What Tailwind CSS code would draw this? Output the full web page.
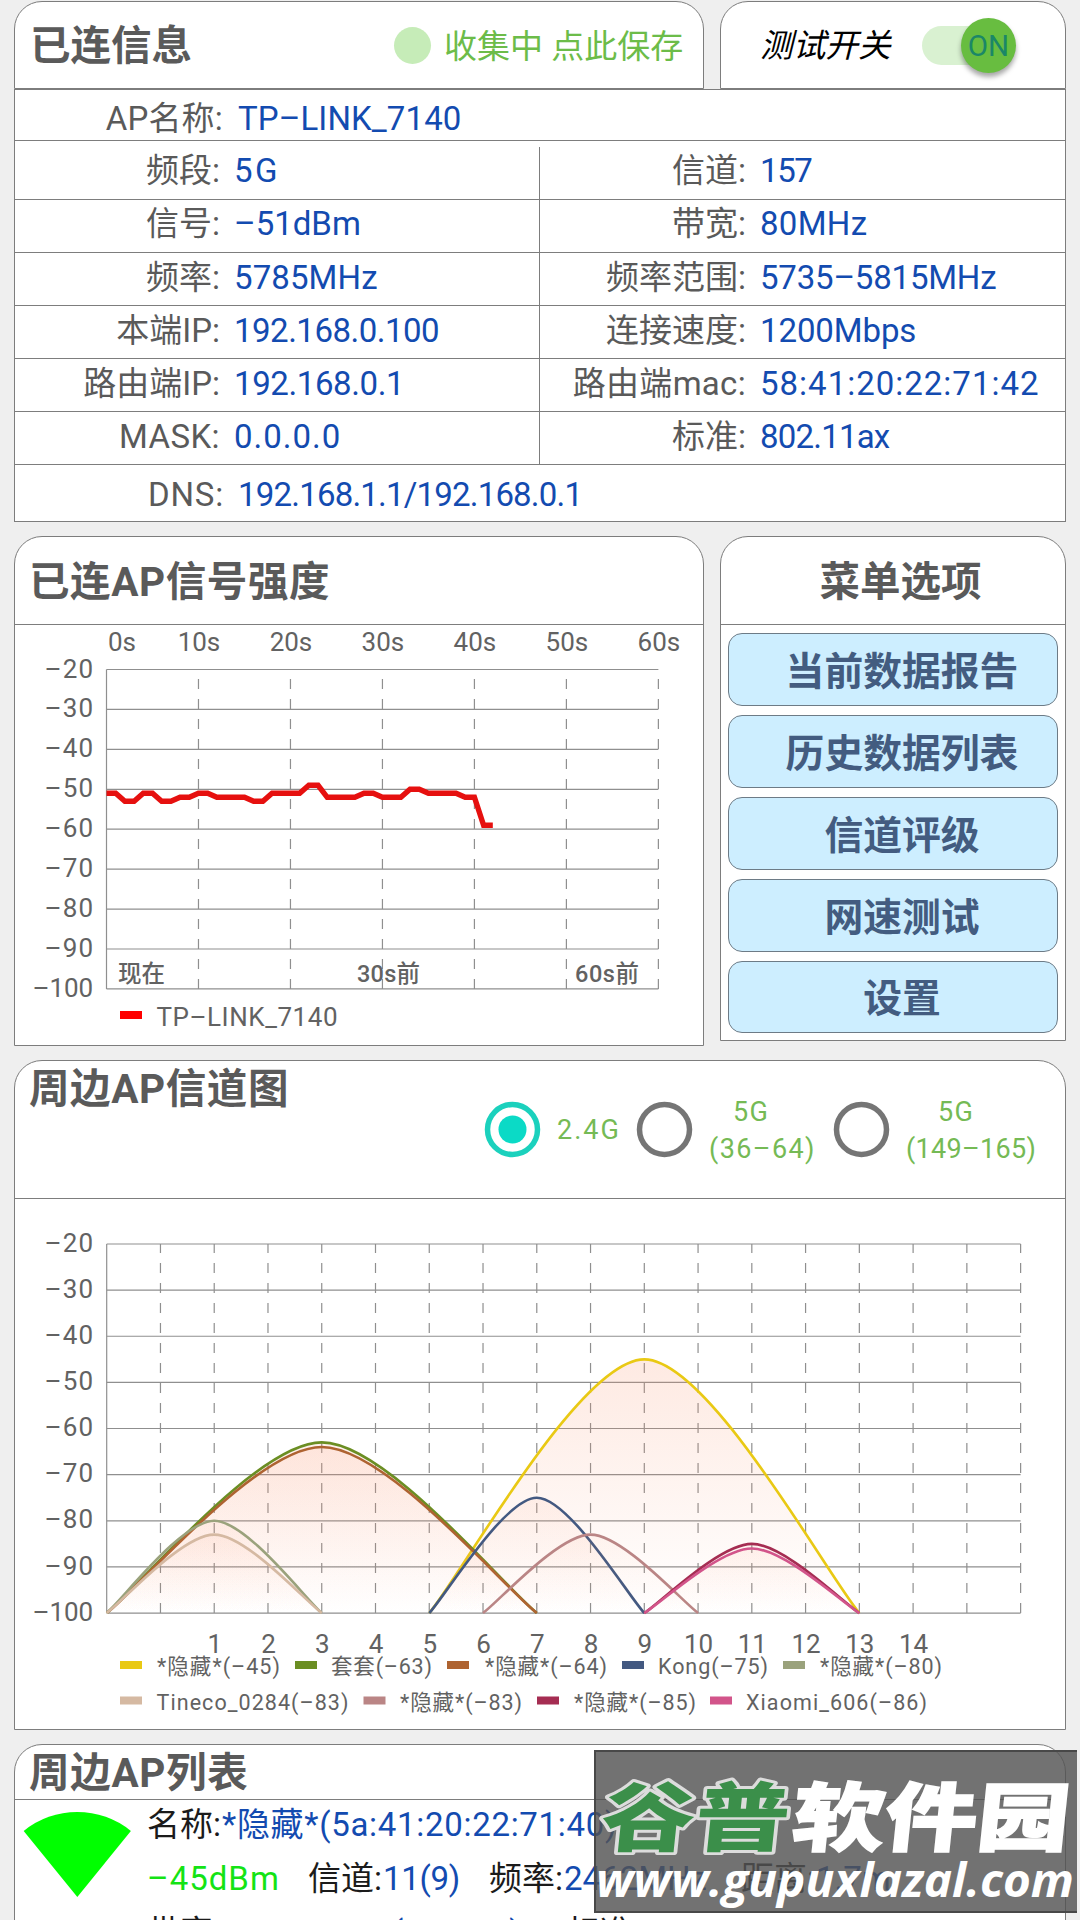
<!DOCTYPE html>
<html lang="zh-CN">
<head>
<meta charset="utf-8">
<title>WiFi</title>
<script src="https://cdn.jsdelivr.net/npm/@tailwindcss/browser@4"></script>
</head>
<body class="bg-[#efefef]">
<main class="relative h-[1920px] w-[1080px] overflow-hidden pt-[1px] pl-[14px] text-[#5a5a5a] [font-family:Roboto,'Noto_Sans_CJK_SC',sans-serif]">

  <!-- connection info -->
  <div class="flex gap-4">
    <div class="flex h-[88px] w-[690px] items-center rounded-t-[28px] border border-[#7d7d7d] bg-white pl-[15px]">
      <h2 class="w-[364px] pt-[3px] text-[40.5px] leading-none font-bold">已连信息</h2>
      <span class="size-[37px] rounded-full bg-[#c6ecb8]"></span>
      <span class="ml-[13px] pt-[2px] text-[33px] leading-none whitespace-nowrap text-[#6cbc49]">收集中 点此保存</span>
    </div>
    <div class="flex h-[88px] w-[346px] items-center rounded-t-[28px] border border-[#7d7d7d] bg-white pl-[39px]">
      <span class="w-[162px] pt-[3px] text-[32.7px] leading-none text-black italic">测试开关</span>
      <div class="flex h-[39px] w-[94px] items-center justify-end rounded-full bg-linear-to-r from-[#d9f1d1] from-60% to-transparent to-80%">
        <span class="flex size-[55px] shrink-0 items-center justify-center rounded-full bg-[#68bd40] pt-[2px] text-[29.5px] text-[#1b8767] shadow-[0_4px_5px_rgba(0,0,0,0.35)]">ON</span>
      </div>
    </div>
  </div>
  <section id="info" class="w-[1052px] border border-[#7d7d7d] bg-white text-[33px] leading-none whitespace-nowrap">
    <div class="flex h-[51px] items-center border-b border-[#7d7d7d] pt-[7px]">
      <span class="w-[208px] text-right tracking-[0.2px]">AP名称:</span><span class="ml-[15px] tracking-[0.1px] text-[#134bb0]">TP–LINK_7140</span>
    </div>
    <div class="flex h-[59px] border-b border-[#7d7d7d]">
      <div class="mt-[6px] flex w-[525px] items-center border-r border-[#7d7d7d] pb-[5px]"><span class="w-[205px] text-right">频段:</span><span class="ml-[14px] tracking-[2.5px] text-[#134bb0]">5G</span></div>
      <div class="flex items-center"><span class="w-[206px] text-right">信道:</span><span class="ml-[14px] tracking-[-1.4px] text-[#134bb0]">157</span></div>
    </div>
    <div class="flex h-[53px] border-b border-[#7d7d7d]">
      <div class="flex w-[525px] items-center border-r border-[#7d7d7d] pb-[5px]"><span class="w-[205px] text-right">信号:</span><span class="ml-[14px] text-[#134bb0]">–51dBm</span></div>
      <div class="flex items-center pb-[5px]"><span class="w-[206px] text-right">带宽:</span><span class="ml-[14px] tracking-[0.3px] text-[#134bb0]">80MHz</span></div>
    </div>
    <div class="flex h-[53px] border-b border-[#7d7d7d]">
      <div class="flex w-[525px] items-center border-r border-[#7d7d7d] pb-[4px]"><span class="w-[205px] text-right">频率:</span><span class="ml-[14px] tracking-[0.1px] text-[#134bb0]">5785MHz</span></div>
      <div class="flex items-center pb-[4px]"><span class="w-[206px] text-right">频率范围:</span><span class="ml-[14px] tracking-[-0.2px] text-[#134bb0]">5735–5815MHz</span></div>
    </div>
    <div class="flex h-[53px] border-b border-[#7d7d7d]">
      <div class="flex w-[525px] items-center border-r border-[#7d7d7d] pb-[4px]"><span class="w-[205px] text-right">本端IP:</span><span class="ml-[14px] tracking-[-0.5px] text-[#134bb0]">192.168.0.100</span></div>
      <div class="flex items-center pb-[4px]"><span class="w-[206px] text-right">连接速度:</span><span class="ml-[14px] tracking-[-0.1px] text-[#134bb0]">1200Mbps</span></div>
    </div>
    <div class="flex h-[53px] border-b border-[#7d7d7d]">
      <div class="flex w-[525px] items-center border-r border-[#7d7d7d] pb-[4px]"><span class="w-[205px] text-right">路由端IP:</span><span class="ml-[14px] tracking-[-0.4px] text-[#134bb0]">192.168.0.1</span></div>
      <div class="flex items-center pb-[4px]"><span class="w-[206px] text-right tracking-[0.3px]">路由端mac:</span><span class="ml-[14px] tracking-[1px] text-[#134bb0]">58:41:20:22:71:42</span></div>
    </div>
    <div class="flex h-[53px] border-b border-[#7d7d7d]">
      <div class="flex w-[525px] items-center border-r border-[#7d7d7d] pb-[4px]"><span class="w-[205px] text-right tracking-[0.4px]">MASK:</span><span class="ml-[14px] tracking-[1px] text-[#134bb0]">0.0.0.0</span></div>
      <div class="flex items-center pb-[4px]"><span class="w-[206px] text-right">标准:</span><span class="ml-[14px] tracking-[-0.8px] text-[#134bb0]">802.11ax</span></div>
    </div>
    <div class="flex h-[56px] items-center pt-[3px]">
      <span class="w-[209px] text-right tracking-[0.8px]">DNS:</span><span class="ml-[14px] tracking-[-0.8px] text-[#134bb0]">192.168.1.1/192.168.0.1</span>
    </div>
  </section>

  <!-- signal strength + menu -->
  <div class="mt-[14px] flex items-start gap-4">
    <section class="h-[510px] w-[690px] rounded-t-[28px] border border-[#7d7d7d] bg-white">
      <h2 class="flex h-[88px] items-center border-b border-[#7d7d7d] pt-[3px] pl-[14px] text-[40.5px] leading-none font-bold tracking-[0.6px]">已连AP信号强度</h2>
      <svg id="signal" class="block" width="688" height="420" viewBox="15 625 688 420"></svg>
    </section>
    <section class="h-[505px] w-[346px] rounded-t-[28px] border border-[#7d7d7d] bg-white">
      <h2 class="flex h-[88px] items-center justify-center border-b border-[#7d7d7d] pt-[3px] pl-[15px] text-[40.5px] leading-none font-bold">菜单选项</h2>
      <div class="flex flex-col gap-[9px] px-[7px] pt-[8px] text-[38.8px] leading-none font-bold text-[#435c80]">
        <button class="h-[73px] rounded-[14px] border border-[#6d7b86] bg-[#cdeeff] pt-[5px] pl-[18px]">当前数据报告</button>
        <button class="h-[73px] rounded-[14px] border border-[#6d7b86] bg-[#cdeeff] pt-[5px] pl-[18px]">历史数据列表</button>
        <button class="h-[73px] rounded-[14px] border border-[#6d7b86] bg-[#cdeeff] pt-[5px] pl-[18px]">信道评级</button>
        <button class="h-[73px] rounded-[14px] border border-[#6d7b86] bg-[#cdeeff] pt-[5px] pl-[18px]">网速测试</button>
        <button class="h-[72px] rounded-[14px] border border-[#6d7b86] bg-[#cdeeff] pt-[5px] pl-[18px]">设置</button>
      </div>
    </section>
  </div>

  <!-- channel chart -->
  <section class="mt-[14px] h-[670px] w-[1052px] rounded-t-[28px] border border-[#7d7d7d] bg-white">
    <div class="flex h-[138px] border-b border-[#7d7d7d] pl-[14px]">
      <h2 class="w-[455px] pt-[8px] text-[40.5px] leading-[40px] font-bold tracking-[0.6px]">周边AP信道图</h2>
      <div class="flex h-[136px] items-center text-[27px] leading-[37px] text-[#75ba55]">
        <svg width="57" height="57" viewBox="0 0 57 57"><circle cx="28.5" cy="28.5" r="25" fill="none" stroke="#1bd1bd" stroke-width="5.5"/><circle cx="28.5" cy="28.5" r="14" fill="#0bdac6"/></svg>
        <span class="ml-[16px] w-[79px] pt-[2px] tracking-[2px]">2.4G</span>
        <svg width="57" height="57" viewBox="0 0 57 57"><circle cx="28.5" cy="28.5" r="25" fill="none" stroke="#757575" stroke-width="5.5"/></svg>
        <span class="ml-[16px] w-[124px] pt-[3px] tracking-[1.4px]"><span class="ml-[24px]">5G</span><br>(36–64)</span>
        <svg width="57" height="57" viewBox="0 0 57 57"><circle cx="28.5" cy="28.5" r="25" fill="none" stroke="#757575" stroke-width="5.5"/></svg>
        <span class="ml-[16px] pt-[3px] tracking-[0.3px]"><span class="ml-[32px] tracking-[1.4px]">5G</span><br>(149–165)</span>
      </div>
    </div>
    <svg id="channels" class="block" width="1050" height="530" viewBox="15 1199 1050 530"></svg>
  </section>

  <!-- AP list -->
  <section class="mt-[14px] h-[240px] w-[1052px] rounded-t-[28px] border border-[#7d7d7d] bg-white">
    <h2 class="flex h-[55px] items-center border-b border-[#7d7d7d] pt-[2px] pl-[14px] text-[40.5px] leading-none font-bold tracking-[0.7px]">周边AP列表</h2>
    <div class="flex">
      <svg class="mt-[10px] ml-[7px] shrink-0" width="110" height="90" viewBox="0 0 110 90"><path d="M55.3 87 1.7 21A85 85 0 0 1 108.9 21Z" fill="#0f0"/></svg>
      <div class="ml-[15px] text-[33px] leading-[54px] whitespace-nowrap text-[#1b1b1b]">
        <p class="-mt-[2px] flex"><span class="w-[75px]">名称:</span><span class="tracking-[0.7px] text-[#134bb0]">*隐藏*(5a:41:20:22:71:40)</span></p>
        <p class="flex"><span class="w-[161px] tracking-[1px] text-[#14e314]">–45dBm</span><span class="w-[75px]">信道:</span><span class="w-[106px] tracking-[-0.3px] text-[#134bb0]">11(9)</span><span class="w-[75px]">频率:</span><span class="w-[177px] text-[#134bb0]">2462MHz</span><span class="w-[75px]">距离:</span><span class="text-[#134bb0]">1.7m</span></p>
        <p class="flex"><span class="w-[75px]">带宽:</span><span class="w-[345px] text-[#134bb0]">2452–2472(20MHz)</span><span>标准:</span></p>
      </div>
    </div>
  </section>

  <!-- site badge -->
  <div class="absolute top-[1750px] left-[594px] h-[163px] w-[483px] border-y-2 border-l-2 border-[#484848] bg-[#535353]/82">
    <svg class="block" width="481" height="159" viewBox="596 1752 481 159" font-family="'Noto Sans CJK SC',sans-serif" font-weight="900">
      <g transform="translate(603 1845) skewX(-6)">
        <text x="-4" y="0" font-size="75" textLength="188" lengthAdjust="spacingAndGlyphs" fill="#3b8f4a" stroke="#dcdcdc" stroke-width="6" stroke-linejoin="round" paint-order="stroke">谷普</text>
        <text x="187" y="0" font-size="75" textLength="277" lengthAdjust="spacingAndGlyphs" fill="#fff" stroke="#fff" stroke-width="1.5">软件园</text>
      </g>
      <text x="596" y="1897" font-family="'Open Sans',sans-serif" font-weight="700" font-style="italic" font-size="46" textLength="478" lengthAdjust="spacingAndGlyphs" fill="#fff">www.gupuxlazal.com</text>
    </svg>
  </div>
</main>

<script>
const line = (x1, y1, x2, y2, extra = '') =>
  `<line x1="${x1}" y1="${y1}" x2="${x2}" y2="${y2}" stroke="#8f8f8f" stroke-width="1.2" ${extra}/>`;
const label = (x, y, t, size = 26, anchor = 'middle', len = 0, weight = 400) =>
  `<text x="${x}" y="${y}" font-size="${size}" font-weight="${weight}" text-anchor="${anchor}" fill="#626262"${len ? ` textLength="${len}"` : ''}>${t}</text>`;
// dBm scale label
const level = (y, i) => label(i === 8 ? 32.5 : 44.5, y, '–' + (20 + i * 10), 26, 'start', i === 8 ? 60.5 : 48.5);

// signal history: one sample per second
(() => {
  const x0 = 106.5, y0 = 669.5, dx = 91.98, dy = 39.93, bottom = y0 + 8 * dy;
  let s = '';
  for (let i = 0; i <= 8; i++) {
    s += line(x0, y0 + i * dy, x0 + 6 * dx, y0 + i * dy);
    s += level(y0 + i * dy + 8, i);
  }
  s += line(x0, y0, x0, bottom);
  for (let i = 0; i <= 6; i++) {
    if (i) s += line(x0 + i * dx, bottom, x0 + i * dx, y0, 'stroke-dasharray="10 10"');
    s += label(i ? x0 + i * dx + 0.5 : 122, 651, i * 10 + 's');
  }
  s += label(118, 982, '现在', 23.5, 'start', 0, 500) + label(357, 982, '30s前', 23.5, 'start', 63, 500) + label(575, 982, '60s前', 23.5, 'start', 64, 500);
  const v = [51,51,53,53,51,51,53,53,52,52,51,51,52,52,52,52,53,53,51,51,51,51,49,49,52,52,52,52,51,51,52,52,52,50,50,51,51,51,51,52,52,59,59];
  s += `<polyline fill="none" stroke="#e6100f" stroke-width="5.4" points="${v.map((d, i) => `${x0 + i * dx / 10},${y0 + (d - 20) * dy / 10}`).join(' ')}"/>`;
  s += '<rect x="120" y="1011" width="22" height="8" fill="#f00"/>' + label(156.5, 1025.5, 'TP–LINK_7140', 26, 'start', 181);
  document.getElementById('signal').innerHTML = s;
})();

// channel occupancy: [name, dBm, centre, half width, colour, swatch x, text x, text length, row]
(() => {
  const x0 = 106.7, y0 = 1244, dx = 53.76, dy = 46.13, bottom = y0 + 8 * dy;
  const aps = [
    ['*隐藏*', 45, 10, 4, '#e9c914', 120, 157, 123, 0],
    ['套套', 63, 4, 4, '#6b8e23', 295, 331, 101, 0],
    ['*隐藏*', 64, 4, 4, '#ae6331', 447, 485, 122, 0],
    ['Kong', 75, 8, 2, '#435981', 622, 658, 110, 0],
    ['*隐藏*', 80, 2, 2, '#9aa27c', 783, 820, 122, 0],
    ['Tineco_0284', 83, 2, 2, '#d5b9a2', 120, 156.5, 192, 1],
    ['*隐藏*', 83, 9, 2, '#ba8585', 363.5, 400, 122, 1],
    ['*隐藏*', 85, 12, 2, '#a52d52', 537, 574, 122, 1],
    ['Xiaomi_606', 86, 12, 2, '#d2548a', 710, 746, 181, 1],
  ];
  let s = `<defs><linearGradient id="haze" gradientUnits="userSpaceOnUse" x1="0" x2="0" y1="${y0}" y2="${bottom}"><stop offset="0" stop-color="#fa9068" stop-opacity=".28"/><stop offset="1" stop-color="#fa9068" stop-opacity="0"/></linearGradient></defs>`;
  for (let i = 0; i <= 8; i++) {
    s += line(x0, y0 + i * dy, x0 + 17 * dx, y0 + i * dy);
    s += level(y0 + i * dy + 7.7, i);
  }
  s += line(x0, y0, x0, bottom);
  for (let i = 1; i <= 17; i++) {
    s += line(x0 + i * dx, bottom, x0 + i * dx, y0, 'stroke-dasharray="10 10"');
    if (i > 1 && i < 16) s += label(x0 + i * dx + 0.5, 1653, i - 1);
  }
  const k = 0.15;
  for (const [name, db, c, half, color, sx, tx, len, row] of aps) {
    const w = half * dx, cx = x0 + c * dx, h = (100 - db) * dy / 10, top = bottom - h;
    const d = `M${cx - w} ${bottom}C${cx - w + k * w} ${bottom - k * h} ${cx - 2 * k * w} ${top} ${cx} ${top}S${cx + w - k * w} ${bottom - k * h} ${cx + w} ${bottom}`;
    s += `<path d="${d}Z" fill="url(#haze)"/><path d="${d}" fill="none" stroke="${color}" stroke-width="2.6"/>`;
    s += `<rect x="${sx}" y="${1661 + row * 35.5}" width="22" height="8" fill="${color}"/>`;
    s += label(tx, 1673.5 + row * 36.3, `${name}(–${db})`, 21.5, 'start', len);
  }
  document.getElementById('channels').innerHTML = s;
})();
</script>
</body>
</html>
